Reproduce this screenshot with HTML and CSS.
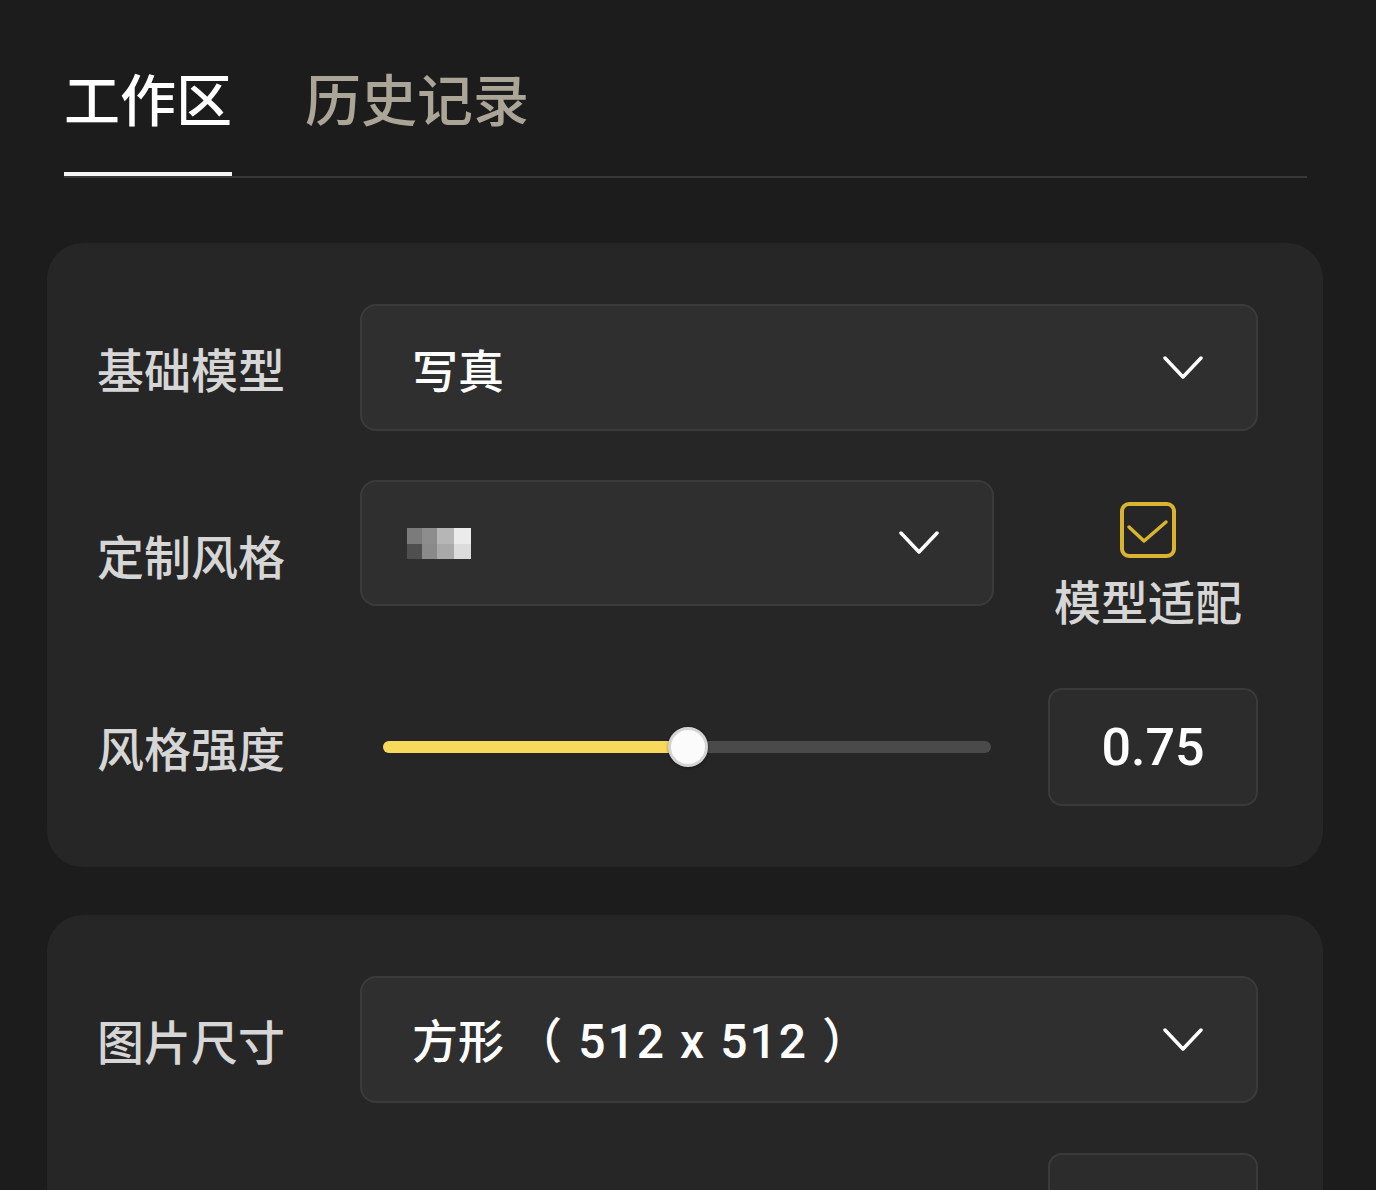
FILE: index.html
```html
<!DOCTYPE html>
<html lang="zh-CN">
<head>
  <meta charset="UTF-8">
  <meta name="viewport" content="width=device-width, initial-scale=1.0">
  <title>工作区</title>
  <link rel="stylesheet" href="styles.css">
</head>
<body>
  <div class="page">
    <!-- Tabs -->
    <nav class="tabs">
      <div class="tab active">工作区</div>
      <div class="tab">历史记录</div>
    </nav>

    <!-- Model settings -->
    <section class="card">
      <div class="row">
        <div class="label">基础模型</div>
        <div class="select">
          <span class="select-text">写真</span>
          <svg class="chevron" width="40" height="26" viewBox="0 0 40 26"><polyline points="2,3 20,22 38,3"/></svg>
        </div>
      </div>

      <div class="row row-style">
        <div class="label">定制风格</div>
        <div class="select select-short">
          <div class="mosaic">
            <i class="m1"></i><i class="m2"></i><i class="m3"></i><i class="m4"></i>
            <i class="m5"></i><i class="m6"></i><i class="m7"></i><i class="m8"></i>
          </div>
          <svg class="chevron" width="40" height="26" viewBox="0 0 40 26"><polyline points="2,3 20,22 38,3"/></svg>
        </div>
        <div class="adapt">
          <svg class="checkbox" width="56" height="56" viewBox="0 0 56 56">
            <rect x="2" y="2" width="52" height="52" rx="7"/>
            <polyline points="9,25 24,39 46,20"/>
          </svg>
          <span>模型适配</span>
        </div>
      </div>

      <div class="row row-strength">
        <div class="label">风格强度</div>
        <div class="slider">
          <div class="slider-fill" style="width: 50.2%"></div>
          <div class="slider-thumb" style="left: 50.2%"></div>
        </div>
        <div class="value">0.75</div>
      </div>
    </section>

    <!-- Image settings -->
    <section class="card">
      <div class="row">
        <div class="label">图片尺寸</div>
        <div class="select">
          <span class="select-text">方形 <span class="num">（ 512 x 512 ）</span></span>
          <svg class="chevron" width="40" height="26" viewBox="0 0 40 26"><polyline points="2,3 20,22 38,3"/></svg>
        </div>
      </div>

      <div class="row row-count">
        <div class="label">生成数量</div>
        <div class="value value-end"></div>
      </div>
    </section>
  </div>
</body>
</html>
```

FILE: styles.css
```css
* {
  box-sizing: border-box;
}

body {
  margin: 0;
  background: #1c1c1c;
  font-family: "Noto Sans CJK SC", "Noto Sans", sans-serif;
  color: #fff;
  overflow: hidden;
}

.page {
  padding: 69px 53px 0 47px;
}

/* Tabs */
.tabs {
  display: flex;
  gap: 73px;
  margin: 0 16px 0 17px;
  border-bottom: 2px solid #383838;
}

.tab {
  font-size: 56px;
  line-height: 56px;
  font-weight: 500;
  padding-bottom: 47px;
  border-bottom: 4px solid transparent;
  color: #aba597;
}

.tab.active {
  color: #fff;
  border-bottom-color: #f4f4f4;
}

/* Cards */
.card {
  margin-top: 65px;
  background: #262626;
  border-radius: 36px;
  padding: 61px 65px 61px 50px;
}

.card + .card {
  margin-top: 48px;
}

.row {
  display: flex;
  align-items: center;
}

.label {
  flex: 0 0 263px;
  font-size: 47px;
  line-height: 56px;
  font-weight: 500;
  color: #d6d6d6;
}

/* Select boxes */
.select {
  flex: 1;
  height: 127px;
  display: flex;
  align-items: center;
  justify-content: space-between;
  padding: 0 53px 0 50px;
  background: #2f2f2f;
  border: 2px solid #3b3b3b;
  border-radius: 16px;
}

.select-text {
  font-size: 46px;
  line-height: 56px;
  font-weight: 500;
  color: #fff;
}

.select-text .num {
  font-family: Roboto, "Noto Sans CJK SC", sans-serif;
  font-weight: 500;
  font-size: 48px;
  letter-spacing: 2px;
}

.chevron polyline {
  fill: none;
  stroke: #fff;
  stroke-width: 3.5;
  stroke-linecap: round;
  stroke-linejoin: round;
}

/* Custom style row */
.row-style {
  margin-top: 49px;
  align-items: flex-start;
}

.row-style .label {
  margin-top: 47px;
}

.select-short {
  flex: 0 0 634px;
  height: 126px;
  padding-left: 45px;
}

.mosaic {
  display: grid;
  grid-template-columns: 15px 15px 17px 17px;
  grid-template-rows: 16px 15px;
  filter: blur(0.6px);
}

.mosaic i { display: block; }
.m1 { background: #7b7b7b; }
.m2 { background: #8d8d8d; }
.m3 { background: #b6b6b6; }
.m4 { background: #ebebeb; }
.m5 { background: #4f4f4f; }
.m6 { background: #8a8a8a; }
.m7 { background: #a9a9a9; }
.m8 { background: #dcdcdc; }

.adapt {
  margin: 22px 16px 0 auto;
  display: flex;
  flex-direction: column;
  align-items: center;
  gap: 14px;
  font-size: 47px;
  line-height: 56px;
  font-weight: 500;
  color: #d6d6d6;
}

.checkbox rect {
  fill: none;
  stroke: #d8b430;
  stroke-width: 4;
}

.checkbox polyline {
  fill: none;
  stroke: #d8b430;
  stroke-width: 3.5;
  stroke-linecap: round;
  stroke-linejoin: round;
}

/* Strength row */
.row-strength {
  margin-top: 60px;
}

.slider {
  position: relative;
  width: 608px;
  height: 12px;
  margin-left: 23px;
  background: #4a4a4a;
  border-radius: 6px;
}

.slider-fill {
  height: 100%;
  background: #f7d95c;
  border-radius: 6px;
}

.slider-thumb {
  position: absolute;
  top: 50%;
  width: 40px;
  height: 40px;
  transform: translate(-50%, -50%);
  background: #fbfbfb;
  border: 3px solid #d4d4d4;
  border-radius: 50%;
  box-shadow: 0 1px 3px rgba(0, 0, 0, 0.4);
}

.value {
  flex: 0 0 210px;
  height: 118px;
  margin-left: 57px;
  display: flex;
  align-items: center;
  justify-content: center;
  background: #2c2c2c;
  border: 2px solid #3a3a3a;
  border-radius: 14px;
  font-family: Roboto, "Noto Sans", sans-serif;
  font-size: 52px;
  font-weight: 500;
  color: #fff;
}

/* Count row */
.row-count {
  margin-top: 50px;
}

.value-end {
  margin-left: auto;
}
```
